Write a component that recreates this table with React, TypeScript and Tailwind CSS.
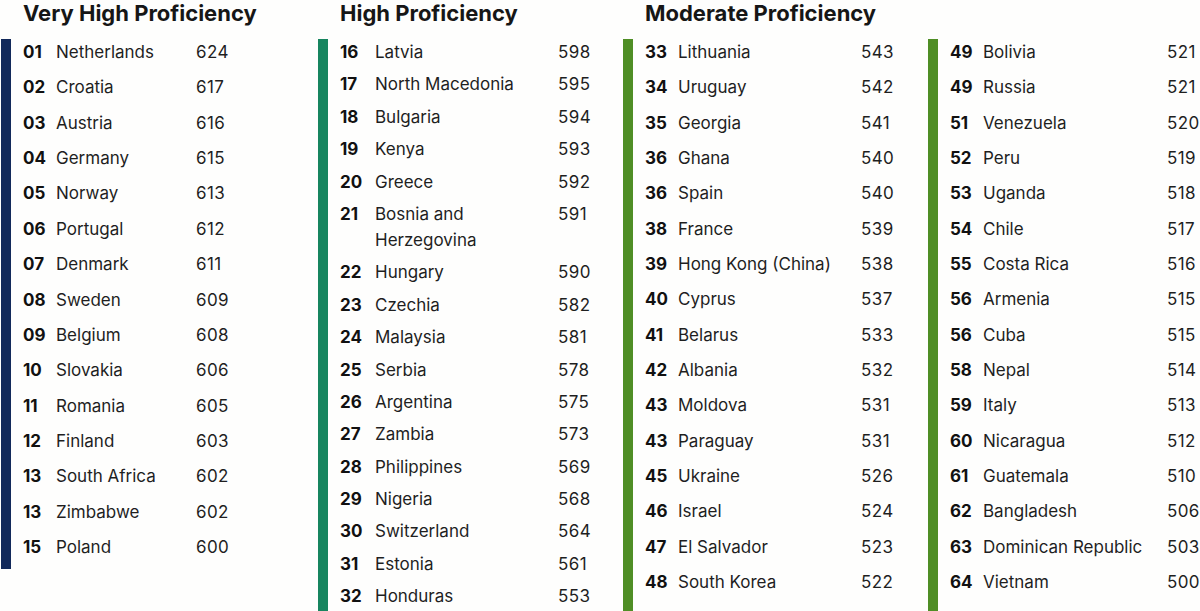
type Row = [string, string, string];

const veryHigh: Row[] = [
  ["01", "Netherlands", "624"],
  ["02", "Croatia", "617"],
  ["03", "Austria", "616"],
  ["04", "Germany", "615"],
  ["05", "Norway", "613"],
  ["06", "Portugal", "612"],
  ["07", "Denmark", "611"],
  ["08", "Sweden", "609"],
  ["09", "Belgium", "608"],
  ["10", "Slovakia", "606"],
  ["11", "Romania", "605"],
  ["12", "Finland", "603"],
  ["13", "South Africa", "602"],
  ["13", "Zimbabwe", "602"],
  ["15", "Poland", "600"],
];

const high: Row[] = [
  ["16", "Latvia", "598"],
  ["17", "North Macedonia", "595"],
  ["18", "Bulgaria", "594"],
  ["19", "Kenya", "593"],
  ["20", "Greece", "592"],
  ["21", "Bosnia and Herzegovina", "591"],
  ["22", "Hungary", "590"],
  ["23", "Czechia", "582"],
  ["24", "Malaysia", "581"],
  ["25", "Serbia", "578"],
  ["26", "Argentina", "575"],
  ["27", "Zambia", "573"],
  ["28", "Philippines", "569"],
  ["29", "Nigeria", "568"],
  ["30", "Switzerland", "564"],
  ["31", "Estonia", "561"],
  ["32", "Honduras", "553"],
];

const moderateA: Row[] = [
  ["33", "Lithuania", "543"],
  ["34", "Uruguay", "542"],
  ["35", "Georgia", "541"],
  ["36", "Ghana", "540"],
  ["36", "Spain", "540"],
  ["38", "France", "539"],
  ["39", "Hong Kong (China)", "538"],
  ["40", "Cyprus", "537"],
  ["41", "Belarus", "533"],
  ["42", "Albania", "532"],
  ["43", "Moldova", "531"],
  ["43", "Paraguay", "531"],
  ["45", "Ukraine", "526"],
  ["46", "Israel", "524"],
  ["47", "El Salvador", "523"],
  ["48", "South Korea", "522"],
];

const moderateB: Row[] = [
  ["49", "Bolivia", "521"],
  ["49", "Russia", "521"],
  ["51", "Venezuela", "520"],
  ["52", "Peru", "519"],
  ["53", "Uganda", "518"],
  ["54", "Chile", "517"],
  ["55", "Costa Rica", "516"],
  ["56", "Armenia", "515"],
  ["56", "Cuba", "515"],
  ["58", "Nepal", "514"],
  ["59", "Italy", "513"],
  ["60", "Nicaragua", "512"],
  ["61", "Guatemala", "510"],
  ["62", "Bangladesh", "506"],
  ["63", "Dominican Republic", "503"],
  ["64", "Vietnam", "500"],
];

function Heading({ title }: { title?: string }) {
  return (
    <h2 className="h-[44px] pl-[22px] pt-[1px] text-[22px] font-bold leading-[24px] text-[#161616]">
      {title}
    </h2>
  );
}

function RankList({
  rows,
  cols,
  gap,
  bar,
}: {
  rows: Row[];
  cols: string;
  gap: string;
  bar: string;
}) {
  return (
    <div className={`border-l-[10px] pl-3 ${bar}`}>
      <ul className={`-mt-[5px] flex flex-col ${gap}`}>
        {rows.map(([rank, name, score], i) => (
          <li key={i} className={`grid ${cols} text-[17px] leading-[26px] text-[#1f1f1f]`}>
            <span className="font-bold text-[#111]">{rank}</span>
            <span className="pr-2">{name}</span>
            <span className="tracking-[0.4px]">{score}</span>
          </li>
        ))}
      </ul>
    </div>
  );
}

export default function App() {
  return (
    <div
      className="flex h-[611px] w-[1200px] overflow-hidden bg-[#fefefd] pl-[1px]"
      style={{ fontFamily: "Inter, 'Noto Sans', sans-serif" }}
    >
      <section className="w-[317px] shrink-0">
        <Heading title="Very High Proficiency" />
        <RankList
          rows={veryHigh}
          cols="grid-cols-[33px_140px_auto]"
          gap="gap-[9.36px]"
          bar="h-[530px] border-[#12295a]"
        />
      </section>
      <section className="w-[305px] shrink-0">
        <Heading title="High Proficiency" />
        <RankList
          rows={high}
          cols="grid-cols-[35px_183px_auto]"
          gap="gap-[6.4px]"
          bar="h-[580px] border-[#17855f]"
        />
      </section>
      <section className="w-[305px] shrink-0">
        <Heading title="Moderate Proficiency" />
        <RankList
          rows={moderateA}
          cols="grid-cols-[33px_183px_auto]"
          gap="gap-[9.33px]"
          bar="h-[580px] border-[#4f8e25]"
        />
      </section>
      <section className="flex-1">
        <Heading />
        <RankList
          rows={moderateB}
          cols="grid-cols-[33px_184px_auto]"
          gap="gap-[9.33px]"
          bar="h-[580px] border-[#4f8e25]"
        />
      </section>
    </div>
  );
}
